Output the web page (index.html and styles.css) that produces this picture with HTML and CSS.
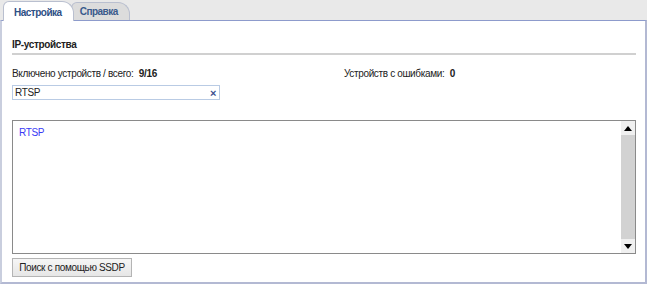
FILE: index.html
```html
<!DOCTYPE html>
<html lang="ru">
<head>
<meta charset="utf-8">
<link rel="stylesheet" href="styles.css">
</head>
<body>
<div class="window">
  <div class="tabs">
    <div class="tab active">Настройка</div>
    <div class="tab">Справка</div>
  </div>
  <div class="panel">
    <div class="section-title">IP-устройства</div>
    <div class="stats">
      <div class="stat">Включено устройств / всего: <b>9/16</b></div>
      <div class="stat stat-right">Устройств с ошибками: <b>0</b></div>
    </div>
    <div class="search">
      <span class="search-text">RTSP</span>
      <span class="clear">×</span>
    </div>
    <div class="list">
      <div class="list-items">
        <div class="item">RTSP</div>
      </div>
      <div class="scrollbar">
        <div class="sb-btn"><span class="arrow up"></span></div>
        <div class="sb-track"></div>
        <div class="sb-btn"><span class="arrow down"></span></div>
      </div>
    </div>
    <div class="actions">
      <button class="btn">Поиск с помощью SSDP</button>
    </div>
  </div>
</div>
</body>
</html>
```
FILE: styles.css
```css
html, body {
  margin: 0;
  padding: 0;
  background: #ffffff;
}
body {
  font-family: "Liberation Sans", Arial, sans-serif;
  font-size: 10px;
  letter-spacing: -0.35px;
  color: #222;
}
.window {
  width: 647px;
  height: 284px;
  display: flex;
  flex-direction: column;
  background: #e9e9e9;
}
.tabs {
  height: 20px;
  display: flex;
  align-items: flex-end;
  padding-left: 3px;
  background: #e9e9e9;
}
.tab {
  position: relative;
  height: 18px;
  line-height: 18px;
  padding: 0 11px 0 8px;
  margin-right: -3px;
  font-weight: bold;
  letter-spacing: -0.5px;
  color: #3a5a8c;
  background: #dcdcdc;
  border: 1px solid #b9bfcf;
  border-bottom: none;
  border-radius: 6px 12px 0 0;
  box-sizing: border-box;
}
.tab.active {
  z-index: 2;
  background: #ffffff;
  height: 20px;
  line-height: 21px;
  color: #2e4f85;
  margin-bottom: -1px;
  padding-left: 10px;
}
.panel {
  flex: 1;
  background: #ffffff;
  border-top: 1px solid #8d9bcc;
  border-left: 2px solid #c9cede;
  border-right: 2px solid #b3b9d3;
  border-bottom: 2px solid #b3b9d3;
  padding: 0 8px 0 10px;
  display: flex;
  flex-direction: column;
}
.section-title {
  margin-top: 18px;
  font-weight: bold;
  padding-bottom: 3px;
  border-bottom: 2px solid #d0d0d0;
  margin-right: 1px;
}
.stats {
  display: flex;
  margin-top: 13px;
}
.stat {
  width: 332px;
  flex-shrink: 0;
}
.stat-right {
  width: auto;
  flex: 1;
}
.stat b {
  margin-left: 3px;
}
.search {
  margin-top: 6px;
  width: 208px;
  height: 15px;
  box-sizing: border-box;
  border: 1px solid #b9cbe4;
  display: flex;
  align-items: center;
  justify-content: space-between;
  padding: 0 3px 0 2px;
}
.clear {
  color: #3c4f8e;
  font-weight: bold;
  font-size: 11px;
}
.list {
  margin-top: 20px;
  height: 134px;
  border: 1px solid #8a8a8a;
  box-sizing: border-box;
  display: flex;
  margin-right: 1px;
}
.list-items {
  flex: 1;
  padding: 6px 6px;
}
.item {
  color: #3a3af5;
}
.scrollbar {
  width: 14px;
  display: flex;
  flex-direction: column;
  background: #f0f0f0;
}
.sb-btn {
  height: 14px;
  display: flex;
  align-items: center;
  justify-content: center;
}
.sb-track {
  flex: 1;
  background: #d2d2d2;
}
.arrow {
  width: 0;
  height: 0;
  border-left: 4px solid transparent;
  border-right: 4px solid transparent;
}
.arrow.up {
  border-bottom: 5px solid #000;
}
.arrow.down {
  border-top: 5px solid #000;
}
.actions {
  margin-top: 4px;
}
.btn {
  font-family: inherit;
  font-size: 10px;
  letter-spacing: -0.35px;
  color: #222;
  height: 19px;
  width: 120px;
  padding: 0;
  background: linear-gradient(#f6f6f6, #e6e6e6);
  border: 1px solid #b4b4b4;
  border-radius: 0;
}
```
